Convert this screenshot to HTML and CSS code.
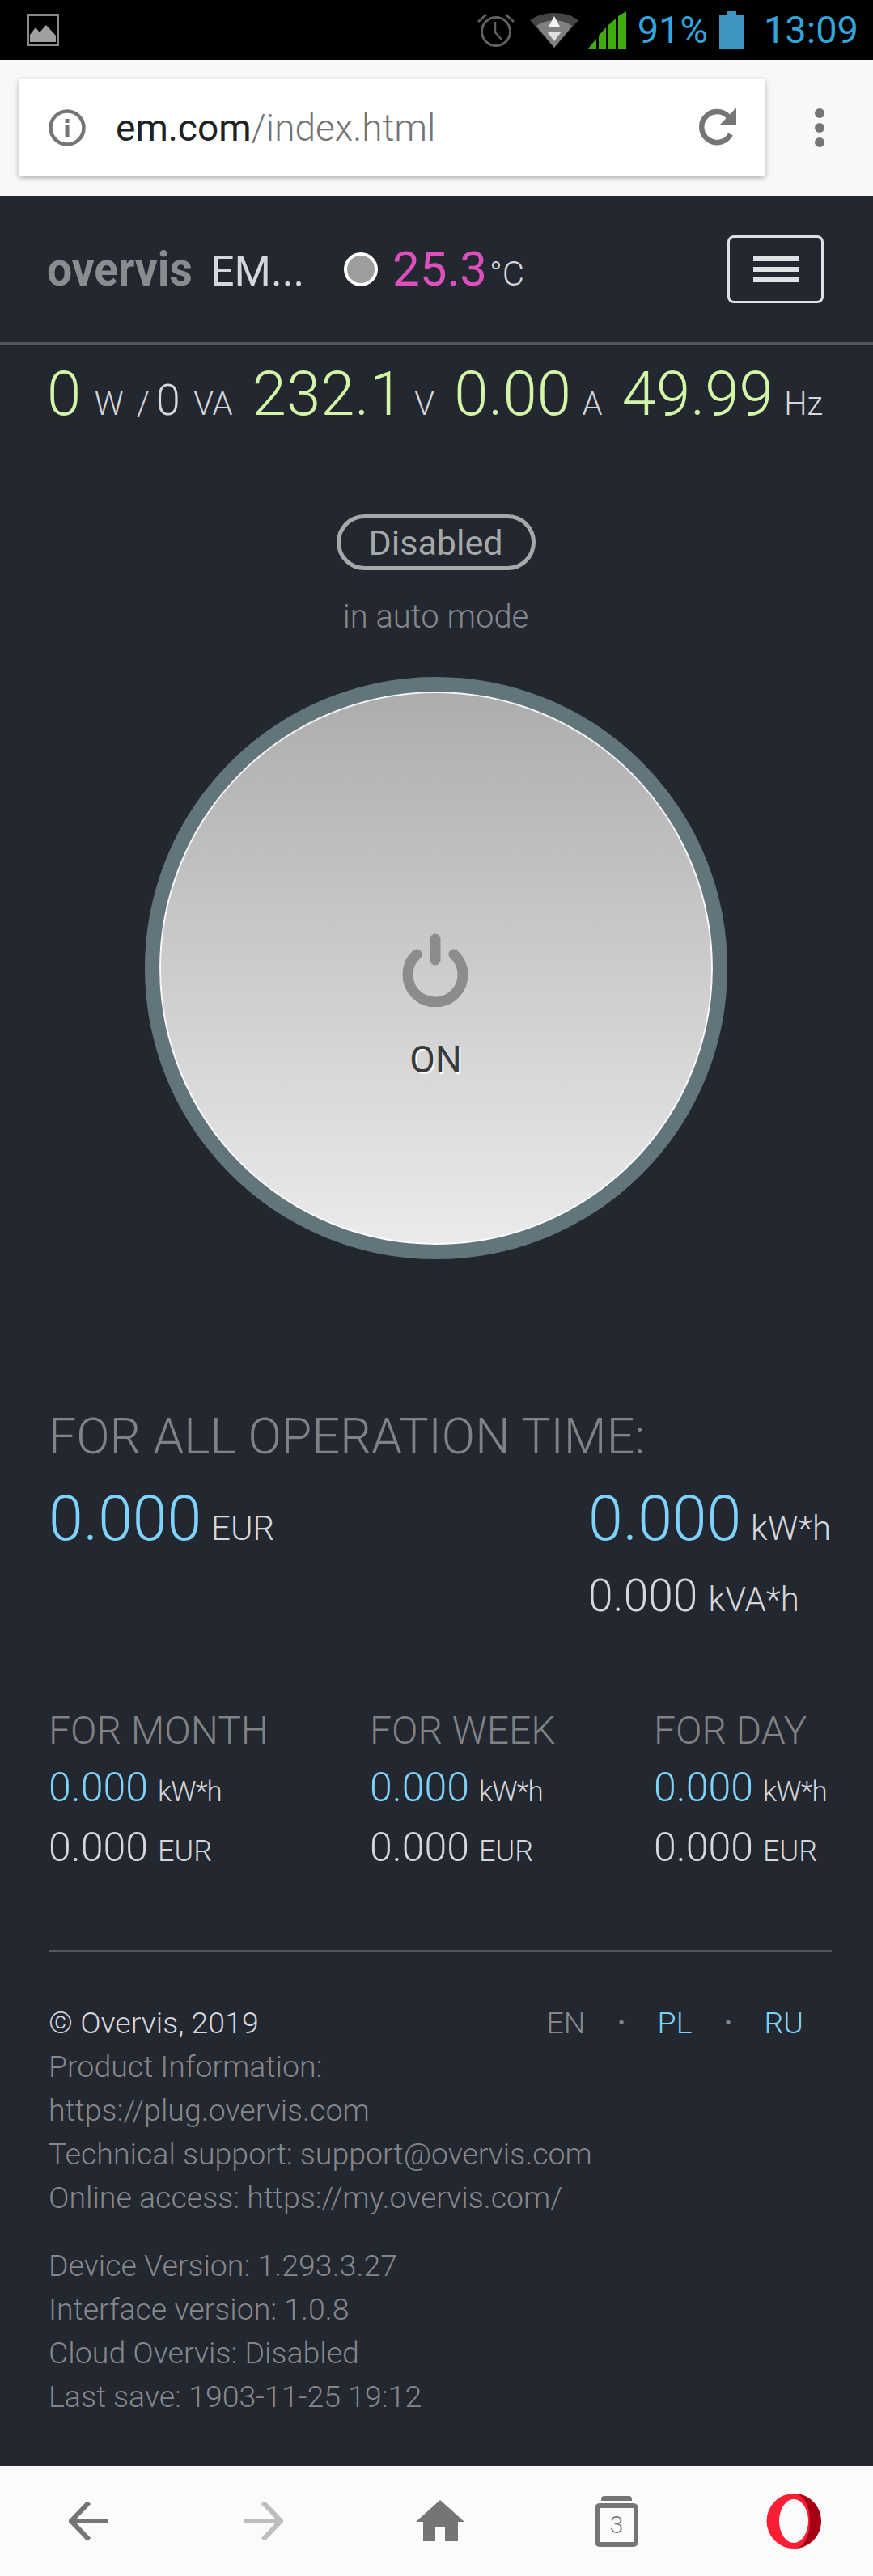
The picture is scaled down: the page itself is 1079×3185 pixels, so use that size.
FILE: index.html
```html
<!DOCTYPE html>
<html lang="en">
<head>
<meta charset="UTF-8" />
<meta name="viewport" content="width=device-width, initial-scale=1" />
<title>Overvis EM</title>
<link rel="stylesheet" href="styles.css">
</head>
<body>
  <!-- Phone status bar -->
  <div class="statusbar">
    <svg class="sb-image" viewBox="0 0 40 40" aria-hidden="true">
      <rect x="1.5" y="1.5" width="37" height="37" fill="none" stroke="#8a8a8a" stroke-width="3"/>
      <path d="M4 35V26L11 17L16 23L24 14L36 27V35Z" fill="#a0a0a0"/>
    </svg>
    <div class="sb-right">
      <svg class="sb-alarm" viewBox="0 0 48 44" aria-hidden="true">
        <circle cx="24" cy="24" r="17.5" fill="none" stroke="#5f5f5f" stroke-width="3"/>
        <path d="M23 12V25L31 34" fill="none" stroke="#5f5f5f" stroke-width="2.5"/>
        <path d="M2 12L12 3M46 12L36 3" fill="none" stroke="#5f5f5f" stroke-width="3"/>
      </svg>
      <svg class="sb-wifi" viewBox="0 0 60 44" aria-hidden="true">
        <path d="M0 10C16 -2 44 -2 60 10L30 44Z" fill="#454545"/>
        <path d="M8 17C20 8 40 8 52 17L30 44Z" fill="#808080"/>
        <path d="M30 5L37 18H23Z" fill="#f4f4f4"/>
        <path d="M21 24H39L30 36Z" fill="#e0e0e0"/>
      </svg>
      <svg class="sb-signal" viewBox="0 0 47 46" aria-hidden="true">
        <path d="M0 46L10 34V46ZM13 46V30L22 20V46ZM25 46V17L34 9V46ZM37 46V6L47 0V46Z" fill="#3fae0c"/>
      </svg>
      <span class="sb-text sb-batt-text">91%</span>
      <svg class="sb-battery" viewBox="0 0 31 46" aria-hidden="true">
        <path d="M10 0H21V4H31V46H0V4H10Z" fill="#3d95c0"/>
      </svg>
      <span class="sb-text">13:09</span>
    </div>
  </div>

  <!-- Browser address bar -->
  <div class="addressbar">
    <div class="urlbox">
      <svg class="info-icon" viewBox="0 0 46 46" aria-hidden="true">
        <circle cx="23" cy="23" r="20.5" fill="none" stroke="#757575" stroke-width="4.5"/>
        <rect x="20.5" y="20" width="5" height="14" fill="#757575"/>
        <rect x="20.5" y="12" width="5" height="5" fill="#757575"/>
      </svg>
      <span class="url"><span class="url-host">em.com</span>/index.html</span>
      <svg class="reload-icon" viewBox="0 0 50 50" aria-hidden="true">
        <path d="M41 33A19 19 0 1 1 38 11" fill="none" stroke="#757575" stroke-width="6.5"/>
        <path d="M48 0V22H27Z" fill="#757575"/>
      </svg>
    </div>
    <div class="dots"><i></i><i></i><i></i></div>
  </div>

  <main class="app">
    <header class="topbar">
      <div class="brand">
        <span class="logo">overvis</span>
        <span class="device">EM...</span>
        <span class="led"></span>
        <span class="temp">25.3</span><span class="temp-unit">°C</span>
      </div>
      <button class="menu-btn" aria-label="Menu"><i></i><i></i><i></i></button>
    </header>

    <div class="stats">
      <span class="stats-power"><b>0</b> <small>W</small> <small class="power-sep">/ <em>0</em></small> <small>VA</small></span>
      <span><b>232.1</b> <small>V</small></span>
      <span><b>0.00</b> <small>A</small></span>
      <span><b>49.99</b> <small>Hz</small></span>
    </div>

    <div class="state">
      <span class="pill">Disabled</span>
      <span class="state-note">in auto mode</span>
      <button class="power">
        <svg class="power-icon" viewBox="0 0 82 91" aria-hidden="true">
          <path d="M18 26A34 34 0 1 0 64 26" fill="none" stroke="#8c8c8c" stroke-width="13" stroke-linecap="round"/>
          <path d="M41 7V33" fill="none" stroke="#8c8c8c" stroke-width="13" stroke-linecap="round"/>
        </svg>
        <span class="power-label">ON</span>
      </button>
    </div>

    <section class="totals">
      <h2>FOR ALL OPERATION TIME:</h2>
      <div class="totals-row">
        <div class="value-lg"><b>0.000</b> <small>EUR</small></div>
        <div class="totals-energy">
          <div class="value-lg"><b>0.000</b> <small>kW*h</small></div>
          <div class="value-md">0.000 <small>kVA*h</small></div>
        </div>
      </div>
    </section>

    <section class="periods">
      <div class="period">
        <h3>FOR MONTH</h3>
        <div class="value-sm"><b>0.000</b> <small class="unit-energy">kW*h</small></div>
        <div class="value-sm">0.000 <small>EUR</small></div>
      </div>
      <div class="period">
        <h3>FOR WEEK</h3>
        <div class="value-sm"><b>0.000</b> <small class="unit-energy">kW*h</small></div>
        <div class="value-sm">0.000 <small>EUR</small></div>
      </div>
      <div class="period">
        <h3>FOR DAY</h3>
        <div class="value-sm"><b>0.000</b> <small class="unit-energy">kW*h</small></div>
        <div class="value-sm">0.000 <small>EUR</small></div>
      </div>
    </section>

    <footer class="info">
      <div class="info-top">
        <div class="copyright">© Overvis, 2019</div>
        <div class="langs">
          <span>EN</span><i>•</i><a href="#">PL</a><i>•</i><a href="#">RU</a>
        </div>
      </div>
      <p>Product Information:<br>https://plug.overvis.com<br>Technical support: support@overvis.com<br>Online access: https://my.overvis.com/</p>
      <p class="versions">Device Version: 1.293.3.27<br>Interface version: 1.0.8<br>Cloud Overvis: Disabled<br>Last save: 1903-11-25 19:12</p>
    </footer>
  </main>

  <!-- Browser bottom bar -->
  <nav class="bottombar">
    <svg class="nav-arrow" viewBox="0 0 48 48" aria-hidden="true">
      <path d="M48 24H3M25 1L3 24L25 47" fill="none" stroke="#757575" stroke-width="6"/>
    </svg>
    <svg class="nav-arrow nav-forward" viewBox="0 0 48 48" aria-hidden="true">
      <path d="M0 24H45M23 1L45 24L23 47" fill="none" stroke="#bdbdbd" stroke-width="6"/>
    </svg>
    <svg class="nav-home" viewBox="0 0 60 52" aria-hidden="true">
      <path d="M30 0L60 27H52V51H36V33H24V51H9V27H0Z" fill="#757575"/>
    </svg>
    <div class="nav-tabs"><span>3</span></div>
    <svg class="nav-opera" viewBox="0 0 68 68" aria-hidden="true">
      <ellipse cx="34" cy="34" rx="33.5" ry="34" fill="#fa1e34"/>
      <path d="M34 0C53 0 68 15 68 34S53 68 34 68C46 68 54 53 54 34S46 0 34 0Z" fill="#a50014"/>
      <ellipse cx="34" cy="34" rx="18" ry="27" fill="#fbfbfb"/>
    </svg>
  </nav>
</body>
</html>
```
FILE: styles.css
```css
/* Reset */
* {
  box-sizing: border-box;
}

html, body {
  margin: 0;
  height: 100%;
}

body {
  width: 1079px;
  height: 3185px;
  display: flex;
  flex-direction: column;
  font-family: Roboto, 'Liberation Sans', sans-serif;
  font-weight: 300;
  background: #23272f;
  color: #d5d7dd;
}

h2, h3, p {
  margin: 0;
  font-weight: 300;
}

b {
  font-weight: 300;
}

em {
  font-style: normal;
}

button {
  font-family: inherit;
  padding: 0;
  cursor: pointer;
}

/* Status bar */
.statusbar {
  height: 74px;
  flex-shrink: 0;
  background: #000;
  display: flex;
  align-items: center;
  justify-content: space-between;
  padding: 0 18px 0 33px;
}

.sb-image {
  width: 40px;
  height: 40px;
}

.sb-right {
  display: flex;
  align-items: center;
}

.sb-alarm {
  width: 48px;
  height: 44px;
  margin-right: 18px;
}

.sb-wifi {
  width: 60px;
  height: 44px;
  margin-right: 12px;
}

.sb-signal {
  width: 47px;
  height: 46px;
  margin-right: 14px;
}

.sb-text {
  font-weight: 400;
  font-size: 47px;
  line-height: 74px;
  color: #33a5d8;
}

.sb-batt-text {
  margin-right: 14px;
}

.sb-battery {
  width: 31px;
  height: 46px;
  margin-right: 24px;
}

/* Address bar */
.addressbar {
  height: 168px;
  flex-shrink: 0;
  background: #f8f8f8;
  display: flex;
  align-items: center;
  padding: 0 60px 0 23px;
}

.urlbox {
  width: 924px;
  height: 120px;
  background: #fff;
  border-radius: 4px;
  box-shadow: 0 2px 6px rgba(0, 0, 0, 0.3);
  display: flex;
  align-items: center;
  padding: 0 34px 0 37px;
}

.info-icon {
  width: 46px;
  height: 46px;
  margin-right: 37px;
}

.url {
  flex-grow: 1;
  font-size: 46px;
  color: #757575;
}

.url-host {
  color: #212121;
  font-weight: 400;
}

.reload-icon {
  width: 50px;
  height: 50px;
}

.dots {
  margin-left: 61px;
  display: flex;
  flex-direction: column;
  gap: 6px;
}

.dots i {
  width: 12px;
  height: 12px;
  border-radius: 50%;
  background: #757575;
}

/* App */
.app {
  flex-grow: 1;
  background: #23272f;
}

.topbar {
  height: 184px;
  border-bottom: 3px solid #55585b;
  display: flex;
  align-items: center;
  justify-content: space-between;
  padding: 0 61px 0 58px;
}

.brand {
  display: flex;
  align-items: baseline;
}

.logo {
  display: inline-block;
  width: 180px;
  margin-right: 22px;
  font-weight: 700;
  font-size: 60px;
  color: #8a8c90;
  transform: scaleX(0.92);
  transform-origin: left;
}

.device {
  width: 112px;
  margin-right: 53px;
  font-weight: 400;
  font-size: 52px;
  white-space: nowrap;
}

.led {
  align-self: center;
  width: 42px;
  height: 42px;
  border: 4px solid #fff;
  border-radius: 50%;
  background: #9d9d9d;
  margin-right: 18px;
}

.temp {
  font-weight: 400;
  font-size: 60px;
  color: #dc50bd;
}

.temp-unit {
  font-size: 42px;
  margin-left: 3px;
}

.menu-btn {
  width: 119px;
  height: 84px;
  background: transparent;
  border: 3px solid #dfe1e5;
  border-radius: 8px;
  display: flex;
  flex-direction: column;
  align-items: center;
  justify-content: center;
  gap: 7px;
}

.menu-btn i {
  width: 56px;
  height: 6px;
  background: #dfe1e5;
}

.stats {
  display: flex;
  justify-content: space-between;
  align-items: baseline;
  padding: 18px 62px 0 58px;
  font-size: 76px;
  line-height: 86px;
  word-spacing: -5px;
}

.stats .stats-power {
  word-spacing: -2px;
}

.stats b {
  color: #d3f5a8;
}

.stats small {
  font-size: 40px;
}

.stats .power-sep em {
  font-size: 54px;
}

.state {
  display: flex;
  flex-direction: column;
  align-items: center;
  padding: 93px 2px 0 0;
}

.pill {
  width: 246px;
  height: 69px;
  border: 5px solid #a6a8aa;
  border-radius: 35px;
  display: flex;
  align-items: center;
  justify-content: center;
  font-weight: 400;
  font-size: 43px;
  color: #a6a8aa;
}

.state-note {
  margin-top: 32px;
  font-size: 40px;
  line-height: 52px;
  color: #85878c;
}

.power {
  margin-top: 48px;
  width: 720px;
  height: 720px;
  border: 18px solid #62757a;
  border-radius: 50%;
  background: linear-gradient(#adadad, #ebebeb);
  box-shadow: inset 0 0 0 2px rgba(255, 255, 255, 0.85);
  display: flex;
  flex-direction: column;
  align-items: center;
  padding-top: 299px;
}

.power-icon {
  width: 82px;
  height: 91px;
  margin-right: 2px;
}

.power-label {
  margin-top: 35px;
  font-weight: 400;
  font-size: 46px;
  line-height: 60px;
  color: #3a3a3a;
  text-shadow: 2px 2px 0 #fff;
}

.totals {
  padding: 184px 53px 0 60px;
}

.totals h2 {
  font-size: 61px;
  line-height: 70px;
  color: #808285;
}

.totals-row {
  display: flex;
  justify-content: space-between;
  margin-top: 24px;
}

.totals-energy {
  width: 299px;
}

.value-lg {
  font-size: 77px;
  line-height: 86px;
  word-spacing: -7px;
  white-space: nowrap;
}

.value-lg b,
.value-sm b,
.langs a {
  color: #7dd3fb;
}

.value-lg small {
  font-size: 42px;
}

.value-md {
  margin-top: 8px;
  font-size: 55px;
  line-height: 64px;
  white-space: nowrap;
}

.value-md small {
  font-size: 42px;
}

.periods {
  display: grid;
  grid-template-columns: 397px 351px 1fr;
  padding: 102px 51px 0 60px;
}

.period h3 {
  font-size: 48px;
  line-height: 56px;
  color: #808285;
}

.value-sm {
  margin-top: 12px;
  font-size: 50px;
  line-height: 56px;
  white-space: nowrap;
}

.period h3 + .value-sm {
  margin-top: 14px;
}

.value-sm small {
  font-size: 36px;
}

.value-sm .unit-energy {
  font-size: 35px;
  letter-spacing: -1px;
}

.info {
  margin: 94px 51px 0 60px;
  border-top: 3px solid #55585b;
  padding-top: 60px;
  font-size: 37.5px;
  line-height: 54px;
  color: #85878c;
}

.info-top {
  display: flex;
  justify-content: space-between;
  padding-right: 35px;
}

.copyright {
  color: #d5d7dd;
}

.langs {
  display: flex;
  gap: 40px;
}

.langs i {
  font-style: normal;
  font-size: 28px;
}

.langs a {
  text-decoration: none;
}

.versions {
  margin-top: 30px;
}

/* Bottom bar */
.bottombar {
  height: 136px;
  flex-shrink: 0;
  background: #fbfbfb;
  display: flex;
  align-items: center;
  padding-left: 85px;
}

.nav-arrow {
  width: 48px;
  height: 48px;
}

.nav-forward {
  margin-left: 169px;
}

.nav-home {
  width: 60px;
  height: 52px;
  margin-left: 164px;
}

.nav-tabs {
  position: relative;
  width: 54px;
  height: 54px;
  margin: 9px 0 0 161px;
  border: 6px solid #757575;
  border-radius: 6px;
  display: flex;
  align-items: center;
  justify-content: center;
  font-size: 30px;
  color: #757575;
}

/* small tab peeking out on top */
.nav-tabs::before {
  content: "";
  position: absolute;
  top: -15px;
  left: 2px;
  width: 38px;
  height: 6px;
  background: #757575;
  border-radius: 4px 4px 0 0;
}

.nav-opera {
  width: 68px;
  height: 68px;
  margin-left: 158px;
}
```
